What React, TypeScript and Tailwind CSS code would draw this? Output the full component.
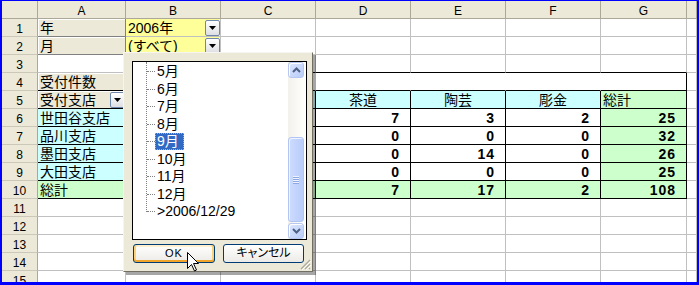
const GR = 'border-r-[#c0c0c0]';
const GB = 'border-b-[#c0c0c0]';
const BR = 'border-r-black';
const BB = 'border-b-black';
const WR = 'border-r-white';

const YEL = 'bg-[#ffff99]';
const CYA = 'bg-[#ccffff]';
const GRN = 'bg-[#ccffcc]';
const BTN = 'bg-[#ece9d8]';

type Cell = {
  t?: string;
  r?: string;
  b?: string;
  bg?: string;
  al?: string;
  bold?: boolean;
  btn?: boolean;
  drop?: boolean;
};

const LEFT = 'justify-start pl-[2px]';
const CENTER = 'justify-center';
const RIGHT = 'justify-end pr-[10px]';

const empty = (n: number): Cell[] => Array.from({ length: n }, () => ({}));

const branchRow = (name: string, nums: string[], total: string): Cell[] => [
  { t: name, bg: CYA, r: BR, b: BB },
  ...nums.map((n) => ({ t: n, r: BR, b: BB, al: RIGHT, bold: true })),
  { t: total, bg: GRN, r: BR, b: BB, al: RIGHT, bold: true },
  {},
];

const ROWS: Cell[][] = [
  [{ t: '年', bg: BTN, btn: true, r: 'border-r-[#808080]', b: 'border-b-[#808080]' }, { t: '2006年', bg: YEL, drop: true }, ...empty(6)],
  [{ t: '月', bg: BTN, btn: true, r: 'border-r-[#808080]', b: 'border-b-[#808080]' }, { t: '(すべて)', bg: YEL, drop: true }, ...empty(6)],
  [{}, { b: BB }, { b: BB }, { b: BB }, { b: BB }, { b: BB }, { b: BB }, {}],
  [
    { t: '受付件数', bg: BTN, btn: true, r: 'border-r-[#808080]', b: BB },
    { t: '受付講座', bg: BTN, btn: true, drop: true, r: BR, b: BB },
    { r: WR, b: BB },
    { r: WR, b: BB },
    { r: WR, b: BB },
    { r: WR, b: BB },
    { r: BR, b: BB },
    {},
  ],
  [
    { t: '受付支店', bg: BTN, btn: true, drop: true, r: BR, b: BB },
    { t: '華道', bg: CYA, r: BR, b: BB, al: CENTER },
    { t: '書道', bg: CYA, r: BR, b: BB, al: CENTER },
    { t: '茶道', bg: CYA, r: BR, b: BB, al: CENTER },
    { t: '陶芸', bg: CYA, r: BR, b: BB, al: CENTER },
    { t: '彫金', bg: CYA, r: BR, b: BB, al: CENTER },
    { t: '総計', bg: GRN, r: BR, b: BB },
    {},
  ],
  branchRow('世田谷支店', ['5', '8', '7', '3', '2'], '25'),
  branchRow('品川支店', ['20', '12', '0', '0', '0'], '32'),
  branchRow('墨田支店', ['4', '8', '0', '14', '0'], '26'),
  branchRow('大田支店', ['10', '15', '0', '0', '0'], '25'),
  [
    { t: '総計', bg: GRN, r: BR, b: BB },
    ...['39', '43', '7', '17', '2', '108'].map((n) => ({ t: n, bg: GRN, r: BR, b: BB, al: RIGHT, bold: true })),
    {},
  ],
  empty(8),
  empty(8),
  empty(8),
  empty(8),
  empty(8),
];

const COL_LETTERS = ['A', 'B', 'C', 'D', 'E', 'F', 'G', ''];

export default function App() {
  return (
    <div className="h-[285px] w-[699px] overflow-hidden border-t border-r-2 border-b-[3px] border-l-2 border-[#0000ff] bg-white font-['Liberation_Sans','Noto_Sans_CJK_JP',sans-serif] text-black">
      <div className="relative h-[281px] w-[695px] overflow-hidden">
        <div className="grid auto-rows-[18px] grid-cols-[36px_88px_95px_95px_95px_95px_95px_86px_10px]">
          <div className="border-r border-b border-r-[#aca899] border-b-[#aca899] bg-[#ece9d8]" />
          {COL_LETTERS.map((l, i) => (
            <div
              key={i}
              className="flex items-end justify-center border-r border-b border-r-[#aca899] border-b-[#aca899] bg-[#ece9d8] pb-[1px] text-[12px] leading-[12px]"
            >
              {l}
            </div>
          ))}
          {ROWS.map((row, ri) => [
            <div
              key={`h${ri}`}
              className="flex items-end justify-center border-r border-b border-r-[#aca899] border-b-[#cbc8b9] bg-[#ece9d8] pb-[1px] text-[12px] leading-[12px]"
            >
              {ri + 1}
            </div>,
            ...row.map((c, ci) => <GridCell key={`${ri}-${ci}`} c={c} />),
          ])}
        </div>
        <FilterPopup />
        <Cursor />
      </div>
    </div>
  );
}

function GridCell({ c }: { c: Cell }) {
  return (
    <div
      className={`flex items-end overflow-hidden whitespace-nowrap border-r border-b pb-[1px] text-[14px] leading-[14px] ${c.r ?? GR} ${c.b ?? GB} ${c.bg ?? 'bg-white'} ${c.al ?? LEFT} ${c.bold ? 'font-bold tracking-[1px]' : ''} ${c.btn ? 'shadow-[inset_1px_1px_0_#ffffff]' : ''}`}
    >
      {c.t && <span>{c.t}</span>}
      {c.drop && <Drop />}
    </div>
  );
}

function Drop() {
  return (
    <span className="mt-[1px] ml-auto flex h-[16px] w-[15px] shrink-0 self-start items-center justify-center rounded-[2px] border border-[#6f86ad] bg-gradient-to-b from-white to-[#dedfe4]">
      <svg width="7" height="4" viewBox="0 0 7 4">
        <path d="M0 0H7L3.5 4Z" fill="#000" />
      </svg>
    </span>
  );
}

const ITEMS = ['5月', '6月', '7月', '8月', '9月', '10月', '11月', '12月', '>2006/12/29'];

function FilterPopup() {
  return (
    <div className="absolute top-[51px] left-[121px] flex h-[220px] w-[190px] flex-col border border-t-[#f6f5ef] border-r-[#716f64] border-b-[#716f64] border-l-[#f6f5ef] bg-[#ece9d8] pt-[8px] pl-[8px] shadow-[3px_3px_0_rgba(0,0,0,0.35)]">
      <div className="flex h-[179px] w-[175px] border border-black bg-white">
        <div className="relative w-[155px] pt-[1px]">
          <div className="absolute top-0 left-[13px] h-[150px] border-l border-dotted border-[#808080]" />
          {ITEMS.map((it) => {
            const sel = it === '9月';
            return (
              <div key={it} className="flex h-[17.5px] items-center">
                <span className="ml-[14px] w-[8px] border-t border-dotted border-[#808080]" />
                <span
                  className={`h-[17px] border pr-[4px] pl-[1px] text-[14px] leading-[15px] whitespace-nowrap ${
                    sel ? 'border-dotted border-[#d8b040] bg-[#316ac5] text-white' : 'border-transparent'
                  }`}
                >
                  {it}
                </span>
              </div>
            );
          })}
        </div>
        <div className="mr-[2px] flex w-[16px] flex-col bg-gradient-to-r from-[#f3f1ec] to-[#fefefb]">
          <ScrollBtn up />
          <div className="mt-[59px] flex h-[85px] flex-col items-center justify-center gap-[1px] rounded-[3px] border border-[#b1c5f4] bg-gradient-to-r from-[#cddbfd] to-[#b9cdfa] shadow-[inset_1px_1px_0_#eef3ff]">
            {[0, 1, 2, 3].map((i) => (
              <span key={i} className="h-[1px] w-[6px] bg-[#eef4ff] shadow-[0_1px_0_#8ea8e6]" />
            ))}
          </div>
          <div className="mt-auto">
            <ScrollBtn />
          </div>
        </div>
      </div>
      <div className="mt-[4px] ml-[1px] flex gap-[8px]">
        <button className="h-[19px] w-[82px] rounded-[3px] border border-[#003c74] bg-gradient-to-b from-white to-[#ecebe6] text-[11px] leading-[15px] tracking-[1px] shadow-[inset_0_-2px_0_#f0a42a,inset_2px_0_0_#fbd27a,inset_-2px_0_0_#fbd27a,inset_0_2px_0_#fff0cf]">
          OK
        </button>
        <button className="h-[19px] w-[81px] rounded-[3px] border border-[#003c74] bg-gradient-to-b from-white to-[#ecebe6] text-[12px] leading-[15px] [font-feature-settings:'palt']">
          キャンセル
        </button>
      </div>
      <svg className="absolute right-[1px] bottom-[1px]" width="12" height="12" viewBox="0 0 12 12">
        <path d="M11 2L2 11M11 6L6 11M11 10L10 11" stroke="#aca899" strokeWidth="1.2" />
        <path d="M12 3L3 12M12 7L7 12" stroke="#ffffff" strokeWidth="1" />
      </svg>
    </div>
  );
}

function ScrollBtn({ up }: { up?: boolean }) {
  return (
    <div className="flex h-[16px] w-[16px] items-center justify-center rounded-[3px] border border-[#b6c8f2] bg-gradient-to-br from-[#dde7fe] to-[#b9cbf7] shadow-[inset_1px_1px_0_#ffffff]">
      <svg width="9" height="6" viewBox="0 0 9 6">
        <path d={up ? 'M1 5L4.5 1.5L8 5' : 'M1 1L4.5 4.5L8 1'} stroke="#4d6185" strokeWidth="2" fill="none" />
      </svg>
    </div>
  );
}

function Cursor() {
  return (
    <svg className="absolute top-[251px] left-[185px]" width="13" height="20" viewBox="0 0 13 20">
      <path d="M0.5 0.5V16.5L4.5 12.5L7.5 19L9.5 18L6.5 11.5H11.5Z" fill="#fff" stroke="#000" strokeWidth="1" />
    </svg>
  );
}
